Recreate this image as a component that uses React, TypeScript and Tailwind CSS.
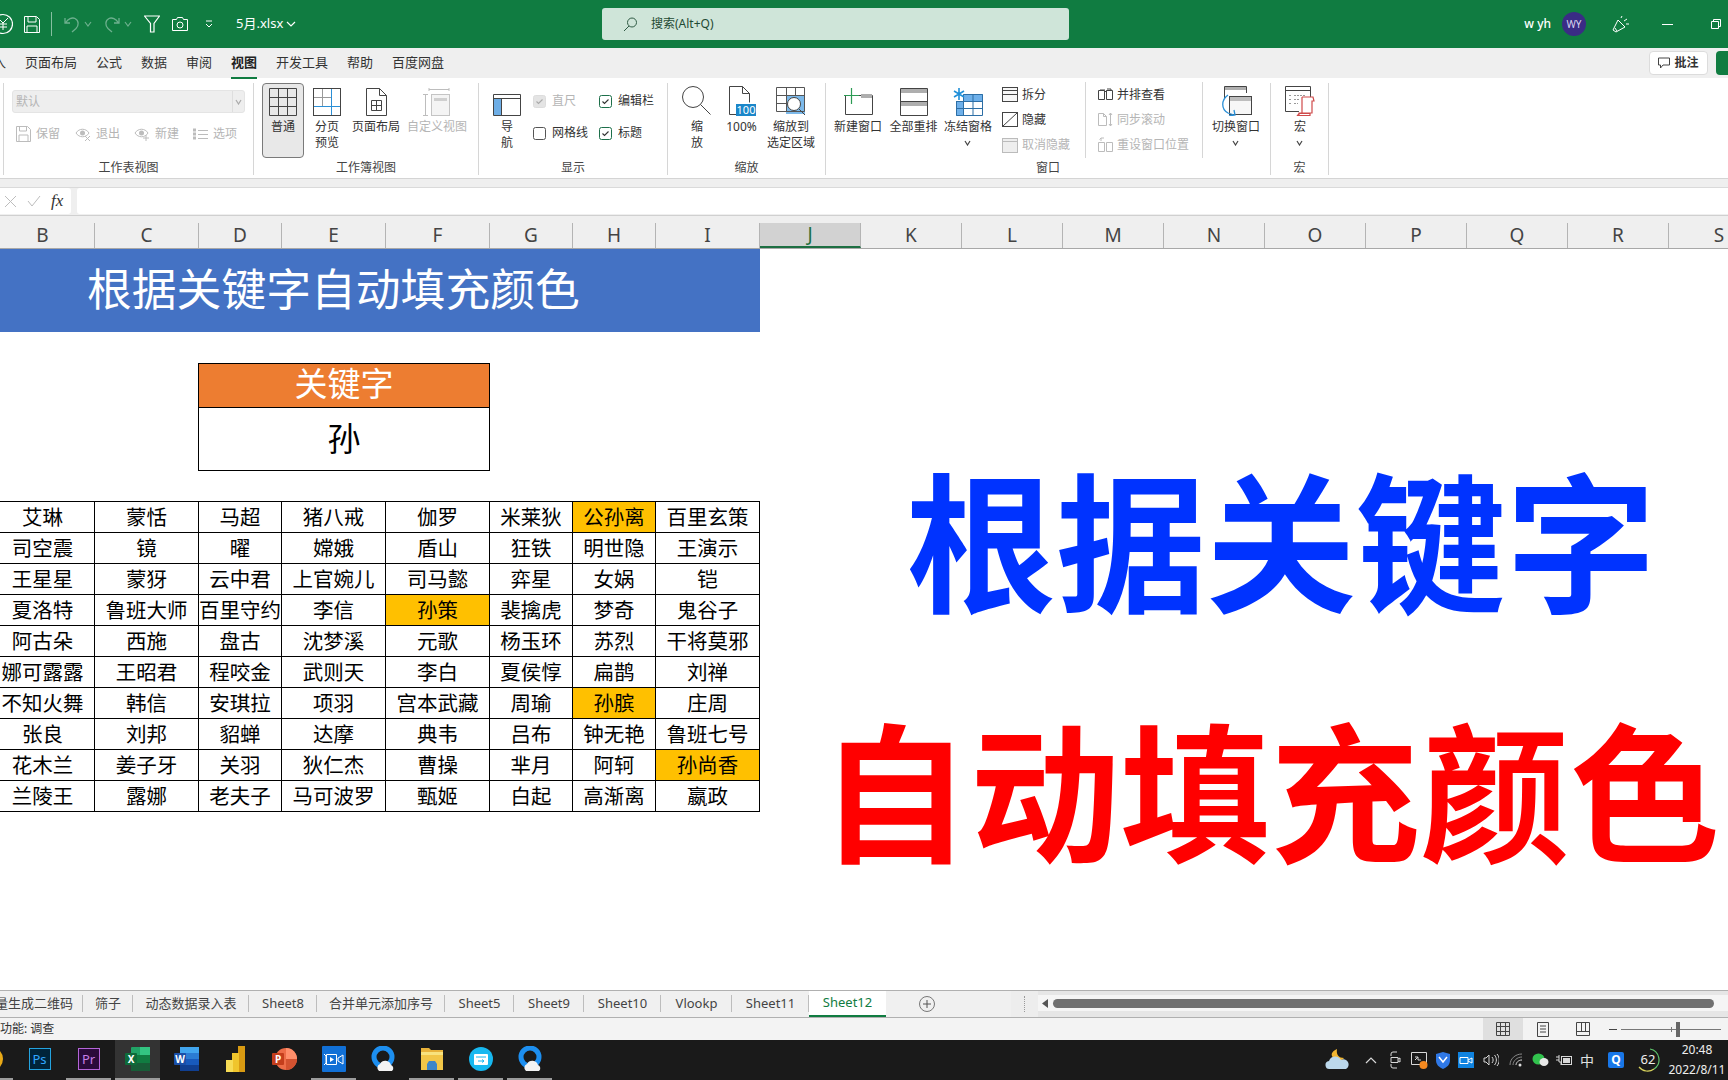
import React from "react";

const Svg = ({ w, h, children, className }: { w: number; h: number; children: React.ReactNode; className?: string }) => (
  <svg width={w} height={h} viewBox={`0 0 ${w} ${h}`} fill="none" className={`shrink-0 ${className ?? ""}`}>
    {children}
  </svg>
);

const Chevron = ({ c = "#fff", w = 10 }: { c?: string; w?: number }) => (
  <Svg w={w} h={6}>
    <path d={`M1 1 L${w / 2} 5 L${w - 1} 1`} stroke={c} strokeWidth="1.2" />
  </Svg>
);

/* ---------- title bar ---------- */
function TitleBar() {
  const dim = "#6db08e";
  return (
    <div className="h-[48px] bg-[#107c41] flex items-center text-white shrink-0">
      <Svg w={20} h={22} className="-ml-[7px]">
        <circle cx="10" cy="11" r="9.5" stroke="#fff" strokeWidth="1.2" />
        <path d="M5 5l5 5 5-5M10 10v7M6 11h8M6 14h8" stroke="#fff" />
      </Svg>
      <Svg w={16} h={17} className="ml-[11px]">
        <path d="M.5.500h12l3 3v13H.500z" stroke="#fff" />
        <path d="M4 1v5h8V1M3 16v-6h10v6" stroke="#fff" />
      </Svg>
      <div className="w-px h-[24px] bg-[#86bfa0] ml-[11px]" />
      <Svg w={16} h={17} className="ml-[12px]">
        <path d="M1 2v5h5M1.500 7C4 3 8 1 11 2.500c4 2 4 7 1 10L8 16" stroke={dim} strokeWidth="1.3" />
      </Svg>
      <div className="ml-[4px]"><Chevron c={dim} w={8} /></div>
      <Svg w={16} h={17} className="ml-[12px]">
        <path d="M15 2v5h-5M14.500 7C12 3 8 1 5 2.500c-4 2-4 7-1 10l4 3.500" stroke={dim} strokeWidth="1.3" />
      </Svg>
      <div className="ml-[4px]"><Chevron c={dim} w={8} /></div>
      <Svg w={16} h={18} className="ml-[12px]">
        <path d="M.5 1h15L10 8.500V17H6.500V8.500z" stroke="#fff" strokeWidth="1.2" />
      </Svg>
      <Svg w={16} h={14} className="ml-[12px]">
        <path d="M.5 2.500h4l1-2h5l1 2h4v11H.500z" stroke="#fff" />
        <circle cx="8" cy="8" r="3" stroke="#fff" />
      </Svg>
      <Svg w={8} h={8} className="ml-[17px]">
        <path d="M1 1h6M1 4l3 3 3-3" stroke="#fff" />
      </Svg>
      <span className="ml-[23px] w-[46px] text-[13px] whitespace-nowrap">5月.xlsx</span>
      <div className="ml-[4px]"><Chevron /></div>
      <div className="ml-[306px] w-[467px] h-[32px] rounded-[3px] bg-[#cfe5d9] flex items-center text-[#1f4a33] text-[12px] pl-[21px]">
        <Svg w={14} h={15}>
          <circle cx="9" cy="5.500" r="4.500" stroke="#2f5a44" />
          <path d="M6 9l-5 5" stroke="#2f5a44" />
        </Svg>
        <span className="ml-[14px]">搜索(Alt+Q)</span>
      </div>
      <div className="ml-auto flex items-center pr-[7px]">
        <span className="text-[12px] font-medium">w yh</span>
        <div className="ml-[11px] w-[24px] h-[24px] rounded-full bg-[#3a2c85] flex items-center justify-center text-[10px] text-[#d9d5f0]">WY</div>
        <Svg w={18} h={18} className="ml-[26px]">
          <path d="M1 15l5-10 7 7-9 5zM3 13l2 3M9 3l1-2M12 6l3-2M14 9l3 0" stroke="#fff" />
        </Svg>
        <div className="ml-[32px] w-[11px] h-px bg-white" />
        <Svg w={10} h={10} className="ml-[38px]">
          <path d="M.5 2.500h7v7h-7zM2.500 2.500v-2h7v7h-2" stroke="#fff" />
        </Svg>
      </div>
    </div>
  );
}

/* ---------- tabs ---------- */
function TabBar() {
  const tabs = ["页面布局", "公式", "数据", "审阅", "视图", "开发工具", "帮助", "百度网盘"];
  return (
    <div className="h-[30px] bg-[#efefef] flex items-center text-[13px] text-[#333] shrink-0">
      <span className="-ml-[20px] w-[26px] mr-[19px] whitespace-nowrap">插入</span>
      <div className="flex gap-[19px]">
        {tabs.map((t) => (
          <div key={t} className={`relative whitespace-nowrap ${t === "视图" ? "font-bold text-[#222]" : ""}`}>
            {t}
            {t === "视图" && <div className="absolute left-0 right-0 -bottom-[6px] h-[2px] bg-[#107c41]" />}
          </div>
        ))}
      </div>
      <div className="ml-auto flex items-center">
        <div className="w-[59px] h-[24px] bg-white border border-[#dcdcdc] rounded-[4px] flex items-center justify-center gap-[4px] text-[12px] font-bold text-[#333]">
          <Svg w={12} h={12}>
            <path d="M.5 1h11v7H5L2.500 11V8h-2z" stroke="#444" />
          </Svg>
          批注
        </div>
        <div className="ml-[8px] w-[12px] h-[24px] rounded-l-[4px] bg-[#107c41]" />
      </div>
    </div>
  );
}

/* ---------- ribbon helpers ---------- */
function Group({ w, label, children }: { w: string; label: string; children: React.ReactNode }) {
  return (
    <div className={`${w} h-[92px] mt-[5px] border-r border-[#d6d6d6] flex flex-col shrink-0`}>
      <div className="h-[75px] flex">{children}</div>
      <div className="mt-[2px] h-[15px] leading-[15px] text-center text-[12px] text-[#444]">{label}</div>
    </div>
  );
}

function Big({
  w,
  icon,
  lines,
  off,
  caret,
  sel,
}: {
  w: string;
  icon: React.ReactNode;
  lines: string[];
  off?: boolean;
  caret?: boolean;
  sel?: boolean;
}) {
  return (
    <div
      className={`${w} h-[75px] pt-[4px] flex flex-col items-center shrink-0 text-[12px] leading-[16px] ${
        off ? "text-[#b5b5b5]" : "text-[#333]"
      } ${sel ? "bg-[#e8e8e8] border border-[#7a7a7a] rounded-[4px]" : "border border-transparent"}`}
    >
      <div className="h-[28px] flex items-end justify-center">{icon}</div>
      <div className="mt-[3px] flex flex-col items-center whitespace-nowrap">
        {lines.map((l) => (
          <span key={l}>{l}</span>
        ))}
        {caret && (
          <div className="h-[16px] flex items-center">
            <Chevron c="#444" w={7} />
          </div>
        )}
      </div>
    </div>
  );
}

const Check = ({ on, off }: { on?: boolean; off?: boolean }) => (
  <Svg w={13} h={13}>
    <rect x=".5" y=".5" width="12" height="12" rx="2" stroke={off ? "#ddd" : on ? "#1d6f4a" : "#555"} fill={off ? "#e4e4e4" : "#fff"} />
    {on && <path d="M3.500 6.500l2 2 4-4" stroke={off ? "#aaa" : "#333"} strokeWidth="1.1" />}
  </Svg>
);

const CheckRow = ({ label, on, off }: { label: string; on?: boolean; off?: boolean }) => (
  <div className={`h-[24px] flex items-center gap-[6px] text-[12px] whitespace-nowrap ${off ? "text-[#b5b5b5]" : "text-[#333]"}`}>
    <Check on={on} off={off} />
    {label}
  </div>
);

const SmallRow = ({ icon, label, off }: { icon: React.ReactNode; label: string; off?: boolean }) => (
  <div className={`h-[26px] flex items-center gap-[4px] text-[12px] whitespace-nowrap ${off ? "text-[#b5b5b5]" : "text-[#333]"}`}>
    {icon}
    {label}
  </div>
);

const MiniAction = ({ icon, label }: { icon: React.ReactNode; label: string }) => (
  <div className="w-[59px] flex items-center gap-[5px] text-[12px] text-[#b5b5b5] whitespace-nowrap">
    {icon}
    {label}
  </div>
);

/* ---------- ribbon icons ---------- */
const G = "#444";
const B = "#2b8fd6";
const Win = ({ x, y, w, h, c = G, bar = "#bdbdbd" }: { x: number; y: number; w: number; h: number; c?: string; bar?: string }) => (
  <>
    <rect x={x + 0.5} y={y + 0.5} width={w} height={h} stroke={c} fill="#f7f7f7" />
    <rect x={x + 1} y={y + 1} width={w - 1} height={4} fill={bar} />
  </>
);

const INormal = () => (
  <Svg w={28} h={28}>
    <path d="M.5.500h27v27H.500zM9.500.5v27M18.500.5v27M.5 9.500h27M.5 18.500h27" stroke={G} />
  </Svg>
);
const IBreak = () => (
  <Svg w={28} h={28}>
    <path d="M9.500.5v18M.5 9.500h18" stroke="#999" />
    <path d="M18.500.5v27M.5 18.500h27" stroke={B} />
    <rect x=".5" y=".5" width="27" height="27" stroke={G} />
  </Svg>
);
const ILayout = () => (
  <Svg w={21} h={28}>
    <path d="M.5.500h13l7 7v20H.500zM13.500.5v7h7" stroke={G} />
    <path d="M5.500 12.500h10v10h-10zM5.500 17.500h10M10.500 12.500v10" stroke={G} />
  </Svg>
);
const ICustom = () => (
  <Svg w={30} h={28}>
    <path d="M7 1.500h20M7 0v3M27 0v3M1 6.500h5M1 27.500h5M3.500 6.500v21" stroke="#bdbdbd" />
    <rect x="9.500" y="6.500" width="18" height="21" stroke="#c4c4c4" fill="#f4f4f4" />
    <rect x="12" y="10" width="13" height="3" fill="#cfcfcf" />
  </Svg>
);
const INav = () => (
  <Svg w={28} h={22}>
    <rect x="1" y="5" width="8" height="16" fill="#6eaee6" />
    <path d="M.5.500h27v21H.500zM.5 4.500h27M8.500 4.500v17" stroke={G} />
  </Svg>
);
const IZoom = () => (
  <Svg w={30} h={30}>
    <circle cx="11" cy="11" r="10.500" stroke={G} />
    <path d="M18.500 18.500l10 10" stroke={G} />
  </Svg>
);
const I100 = () => (
  <Svg w={28} h={30}>
    <path d="M1.500 28.500V.5h13l7 7v9M14.500.5v7h7M1.500 28.500h7" stroke={G} />
    <rect x="8" y="18" width="20" height="12" fill="#1b86c9" />
    <text x="18" y="28" textAnchor="middle" fontSize="11" fill="#fff" fontFamily="Noto Sans">100</text>
  </Svg>
);
const IZoomSel = () => (
  <Svg w={30} h={30}>
    <rect x="10" y="9" width="19" height="19" fill="#7cb9ea" />
    <path d="M.5 1.500h28v24H.500zM.5 9.500h28M.5 17.500h10M10.500 1.500v24M19.500 1.500v8" stroke="#555" />
    <circle cx="18" cy="18" r="6.500" stroke={G} fill="#fff" />
    <path d="M23 23l6 6" stroke={G} />
  </Svg>
);
const INew = () => (
  <Svg w={30} h={28}>
    <path d="M2.500 7.500v19h27v-19H14" stroke={G} />
    <rect x="18" y="6" width="11" height="4" fill="#aeaeae" />
    <path d="M8.500 0v16M1 7.500h15" stroke="#2c9b54" strokeWidth="1.2" />
  </Svg>
);
const IArrange = () => (
  <Svg w={28} h={28}>
    <path d="M.5.500h27v27H.500zM.5 13.500h27" stroke={G} />
    <rect x="1" y="1" width="26" height="4" fill="#aeaeae" />
    <rect x="1" y="14" width="26" height="4" fill="#aeaeae" />
  </Svg>
);
const IFreeze = () => (
  <Svg w={30} h={28}>
    <rect x="4" y="6" width="26" height="22" fill="#fff" />
    <rect x="10" y="6" width="20" height="7" fill="#6eb0ea" />
    <rect x="3" y="13" width="7" height="15" fill="#6eb0ea" />
    <path d="M3.500 13v14.500h26v-21h-19M10.500 6.500v21M20 6.500v21M3.500 13.500h26M3.500 20.500h26" stroke="#2d6ea5" />
    <path d="M6 0v12M1 3l10 6M11 3L1 9" stroke="#1f8fd8" strokeWidth="1.6" />
  </Svg>
);
const ISplit = () => (
  <Svg w={16} h={15}>
    <rect x=".5" y=".5" width="15" height="14" stroke={G} fill="#f7f7f7" />
    <path d="M.5 3.500h15M.5 7.500h15" stroke={G} />
  </Svg>
);
const IHide = () => (
  <Svg w={16} h={15}>
    <rect x=".5" y=".5" width="15" height="14" stroke={G} />
    <path d="M1 14L15 1" stroke={G} />
  </Svg>
);
const IUnhide = () => (
  <Svg w={16} h={15}>
    <rect x=".5" y=".5" width="15" height="14" stroke="#bbb" fill="#eee" />
    <path d="M.5 3.500h15" stroke="#bbb" />
  </Svg>
);
const IBook = ({ c = G }: { c?: string }) => (
  <Svg w={15} h={13}>
    <path d="M.5 2.500h6v9h-6zM8.500 2.500h6v9h-6zM6.500 4.500l2-2" stroke={c} />
    <path d="M2 3v-1h5M13 3V1H9" stroke={c} />
  </Svg>
);
const ISync = () => (
  <Svg w={15} h={15}>
    <path d="M.5 1.500h5l3 3v9h-8zM5.500 1.500v3h3M12.500 1v13M11 3l1.500-2L14 3M11 12l1.500 2 1.500-2" stroke="#bcbcbc" />
  </Svg>
);
const IReset = () => (
  <Svg w={15} h={16}>
    <path d="M.5 5.500h6v9h-6zM8.500 5.500h6v9h-6zM3 4V1h3M3 1L1.500 2.500" stroke="#bcbcbc" />
  </Svg>
);
const ISwitch = () => (
  <Svg w={31} h={30}>
    <path d="M3.500 12V.5h22V7" stroke={G} />
    <rect x="4" y="1" width="21" height="3" fill="#aeaeae" />
    <Win x={8} y={10} w={22} h={18} />
    <path d="M7 9C0 14 0 23 7 27l6 2M13 24l1 5-6 1" stroke={B} strokeWidth="1.3" />
  </Svg>
);
const IMacro = () => (
  <Svg w={30} h={30}>
    <path d="M.5.500h25v25H.500zM.5 4.500h25" stroke={G} />
    <path d="M4 9.500h3M9 9.500h12M4 13.500h3M9 13.500h6M4 17.500h3M9 17.500h4" stroke="#999" strokeDasharray="2 1" />
    <path d="M17 11h11l1 4h-2v12H14v3h-1M14 27.500h11v2H12.500zM17 11v16" stroke="#cf4a4a" strokeWidth="1.2" fill="#fff" />
  </Svg>
);

function Ribbon() {
  return (
    <div className="h-[101px] bg-white border-b border-[#d4d4d4] flex pl-[3px] shrink-0">
      <div className="h-[92px] mt-[5px] border-l border-[#d6d6d6]" />
      <Group w="w-[250px]" label="工作表视图">
        <div className="pl-[8px] pt-[7px] flex flex-col">
          <div className="w-[233px] h-[23px] rounded-[3px] bg-[#eeeeee] border border-[#e4e4e4] flex items-center pl-[3px] text-[12px] text-[#b5b5b5]">
            默认
            <div className="ml-auto h-full w-[12px] border-l border-[#dedede] flex items-center justify-center">
              <Chevron c="#aaa" w={7} />
            </div>
          </div>
          <div className="mt-[9px] h-[24px] flex items-center pl-[4px]">
            <MiniAction
              label="保留"
              icon={
                <Svg w={15} h={16}>
                  <path d="M.5.500h11l3 3v12H.500zM3.500 1v4h7V1M3 15V9h9v6" stroke="#bcbcbc" />
                </Svg>
              }
            />
            <MiniAction
              label="退出"
              icon={
                <Svg w={16} h={14}>
                  <path d="M1 6c3-5 10-5 13 0-3 5-10 5-13 0z" stroke="#bcbcbc" />
                  <circle cx="7.500" cy="6" r="2.500" fill="#bcbcbc" />
                  <path d="M10 9l5 5M15 9l-5 5" stroke="#bcbcbc" />
                </Svg>
              }
            />
            <MiniAction
              label="新建"
              icon={
                <Svg w={16} h={14}>
                  <path d="M1 6c3-5 10-5 13 0-3 5-10 5-13 0z" stroke="#bcbcbc" />
                  <circle cx="7.500" cy="6" r="2.500" fill="#bcbcbc" />
                  <path d="M12 8v6M9 11h6" stroke="#bcbcbc" />
                </Svg>
              }
            />
            <MiniAction
              label="选项"
              icon={
                <Svg w={15} h={13}>
                  <path d="M5 2.500h10M5 6.500h10M5 10.500h10" stroke="#bcbcbc" />
                  <rect x=".5" y="1" width="2" height="2" stroke="#bcbcbc" />
                  <rect x=".5" y="5" width="2" height="2" stroke="#bcbcbc" />
                  <rect x=".5" y="9" width="2" height="2" stroke="#bcbcbc" />
                </Svg>
              }
            />
          </div>
        </div>
      </Group>
      <Group w="w-[225px]" label="工作簿视图">
        <div className="pl-[8px] flex">
          <Big w="w-[42px]" sel icon={<INormal />} lines={["普通"]} />
          <Big w="w-[46px]" icon={<IBreak />} lines={["分页", "预览"]} />
          <Big w="w-[52px]" icon={<ILayout />} lines={["页面布局"]} />
          <Big w="w-[70px]" off icon={<ICustom />} lines={["自定义视图"]} />
        </div>
      </Group>
      <Group w="w-[189px]" label="显示">
        <div className="pl-[9px] flex">
          <Big w="w-[38px]" icon={<INav />} lines={["导", "航"]} />
          <div className="ml-[7px] w-[66px] pt-[6px] flex flex-col gap-[8px]">
            <CheckRow label="直尺" on off />
            <CheckRow label="网格线" />
          </div>
          <div className="pt-[6px] flex flex-col gap-[8px]">
            <CheckRow label="编辑栏" on />
            <CheckRow label="标题" on />
          </div>
        </div>
      </Group>
      <Group w="w-[158px]" label="缩放">
        <div className="pl-[7px] flex">
          <Big w="w-[44px]" icon={<IZoom />} lines={["缩", "放"]} />
          <Big w="w-[45px]" icon={<I100 />} lines={["100%"]} />
          <Big w="w-[54px]" icon={<IZoomSel />} lines={["缩放到", "选定区域"]} />
        </div>
      </Group>
      <Group w="w-[445px]" label="窗口">
        <div className="pl-[5px] flex">
          <Big w="w-[54px]" icon={<INew />} lines={["新建窗口"]} />
          <Big w="w-[57px]" icon={<IArrange />} lines={["全部重排"]} />
          <Big w="w-[52px]" icon={<IFreeze />} lines={["冻结窗格"]} caret />
          <div className="ml-[8px] -mt-[1px] w-[84px] h-[76px] flex flex-col border-r border-[#d6d6d6] self-start">
            <SmallRow icon={<ISplit />} label="拆分" />
            <SmallRow icon={<IHide />} label="隐藏" />
            <SmallRow icon={<IUnhide />} label="取消隐藏" off />
          </div>
          <div className="ml-[12px] -mt-[1px] w-[105px] h-[76px] flex flex-col border-r border-[#d6d6d6] self-start">
            <SmallRow icon={<IBook />} label="并排查看" />
            <SmallRow icon={<ISync />} label="同步滚动" off />
            <SmallRow icon={<IReset />} label="重设窗口位置" off />
          </div>
          <Big w="w-[66px]" icon={<ISwitch />} lines={["切换窗口"]} caret />
        </div>
      </Group>
      <Group w="w-[58px]" label="宏">
        <Big w="w-[58px]" icon={<IMacro />} lines={["宏"]} caret />
      </Group>
    </div>
  );
}

function FormulaBar() {
  return (
    <>
      <div className="h-[9px] bg-[#efefef] border-b border-[#dadada] shrink-0" />
      <div className="h-[28px] bg-[#efefef] flex pb-[1px] border-b border-[#d0d0d0] shrink-0">
        <div className="w-[71px] bg-white rounded-r-[3px] flex items-center pl-[4px] gap-[10px]">
          <Svg w={13} h={13}>
            <path d="M1 1l11 11M12 1L1 12" stroke="#bdbdbd" />
          </Svg>
          <Svg w={14} h={12}>
            <path d="M1 6l4 5 8-10" stroke="#bdbdbd" />
          </Svg>
          <span className="[font-family:'Liberation_Serif',serif] italic text-[17px] text-[#333]">fx</span>
        </div>
        <div className="ml-[6px] flex-1 bg-white rounded-l-[3px]" />
      </div>
    </>
  );
}

/* ---------- sheet ---------- */
const cols: [string, string][] = [
  ["B", "w-[104px]"],
  ["C", "w-[104px]"],
  ["D", "w-[83px]"],
  ["E", "w-[104px]"],
  ["F", "w-[104px]"],
  ["G", "w-[83px]"],
  ["H", "w-[83px]"],
  ["I", "w-[104px]"],
  ["J", "w-[101px]"],
  ["K", "w-[101px]"],
  ["L", "w-[101px]"],
  ["M", "w-[101px]"],
  ["N", "w-[101px]"],
  ["O", "w-[101px]"],
  ["P", "w-[101px]"],
  ["Q", "w-[101px]"],
  ["R", "w-[101px]"],
  ["S", "w-[101px]"],
];

function ColHeader() {
  return (
    <div className="h-[33px] bg-[#efefef] flex items-end -ml-[9px] border-b border-[#a8a8a8] shrink-0">
      {cols.map(([c, w]) => (
        <div
          key={c}
          className={`${w} shrink-0 h-[25px] flex items-center justify-center text-[19px] leading-none border-r border-[#b4b4b4] ${
            c === "J" ? "bg-[#d2d2d2] text-[#1d6f42] border-b-2 border-b-[#1d6f42]" : "text-[#444]"
          }`}
        >
          {c}
        </div>
      ))}
    </div>
  );
}

const rows = [
  ["艾琳", "蒙恬", "马超", "猪八戒", "伽罗", "米莱狄", "公孙离", "百里玄策"],
  ["司空震", "镜", "曜", "嫦娥", "盾山", "狂铁", "明世隐", "王演示"],
  ["王星星", "蒙犽", "云中君", "上官婉儿", "司马懿", "弈星", "女娲", "铠"],
  ["夏洛特", "鲁班大师", "百里守约", "李信", "孙策", "裴擒虎", "梦奇", "鬼谷子"],
  ["阿古朵", "西施", "盘古", "沈梦溪", "元歌", "杨玉环", "苏烈", "干将莫邪"],
  ["娜可露露", "王昭君", "程咬金", "武则天", "李白", "夏侯惇", "扁鹊", "刘禅"],
  ["不知火舞", "韩信", "安琪拉", "项羽", "宫本武藏", "周瑜", "孙膑", "庄周"],
  ["张良", "刘邦", "貂蝉", "达摩", "典韦", "吕布", "钟无艳", "鲁班七号"],
  ["花木兰", "姜子牙", "关羽", "狄仁杰", "曹操", "芈月", "阿轲", "孙尚香"],
  ["兰陵王", "露娜", "老夫子", "马可波罗", "甄姬", "白起", "高渐离", "嬴政"],
];

function Sheet() {
  return (
    <div className="flex-1 flex min-h-0 bg-white overflow-hidden">
      <div className="w-[760px] shrink-0 overflow-hidden">
        <div className="h-[83px] pb-[3px] bg-[#4472c4] flex items-center pl-[87px] text-white text-[44.8px] whitespace-nowrap">
          根据关键字自动填充颜色
        </div>
        <div className="mt-[31px] ml-[198px] w-[292px] border border-black">
          <div className="h-[44px] pb-[3px] bg-[#ed7d31] border-b border-black flex items-center justify-center text-white text-[33px]">关键字</div>
          <div className="h-[62px] flex items-center justify-center text-[33px] text-black">孙</div>
        </div>
        <div className="mt-[30px] -ml-[9px] w-[769px] grid grid-cols-[104px_104px_83px_104px_104px_83px_83px_104px] border-t border-black">
          {rows.flat().map((n, i) => (
            <div
              key={i}
              className={`h-[31px] flex items-center justify-center border-r border-b border-black text-[20.5px] text-black whitespace-nowrap overflow-hidden ${
                n.includes("孙") ? "bg-[#ffc000]" : ""
              }`}
            >
              {n}
            </div>
          ))}
        </div>
      </div>
      <div className="flex-1 pl-[60px] pt-[194px] flex flex-col items-center gap-[50px] font-bold text-[150px] leading-[200px] whitespace-nowrap">
        <div className="h-[200px] pl-[6px] text-[#0033ff]">根据关键字</div>
        <div className="h-[200px] pr-[16px] text-[#ff0000]">自动填充颜色</div>
      </div>
    </div>
  );
}

function SheetTabs() {
  const list: [string, string][] = [
    ["筛子", "w-[50px]"],
    ["动态数据录入表", "w-[116px]"],
    ["Sheet8", "w-[68px]"],
    ["合并单元添加序号", "w-[128px]"],
    ["Sheet5", "w-[69px]"],
    ["Sheet9", "w-[70px]"],
    ["Sheet10", "w-[77px]"],
    ["Vlookp", "w-[71px]"],
    ["Sheet11", "w-[77px]"],
  ];
  return (
    <div className="h-[28px] bg-[#f0f0f0] border-t border-b border-[#b0b0b0] flex items-stretch text-[13px] text-[#444] shrink-0">
      <div className="w-[83px] flex justify-end items-center pr-[10px] overflow-hidden whitespace-nowrap shrink-0 relative">
        <div className="absolute right-0 top-[4px] bottom-[5px] w-px bg-[#bdbdbd]" />
        批量生成二维码
      </div>
      {list.map(([t, w]) => (
        <div key={t} className={`${w} flex items-center justify-center whitespace-nowrap shrink-0 relative`}>
          {t}
          <div className="absolute right-0 top-[4px] bottom-[5px] w-px bg-[#bdbdbd]" />
        </div>
      ))}
      <div className="w-[77px] bg-white border-b-2 border-[#107c41] text-[#107c41] flex items-center justify-center shrink-0">Sheet12</div>
      <div className="w-[125px] flex items-center pl-[33px] shrink-0">
        <Svg w={16} h={16}>
          <circle cx="8" cy="8" r="7.500" stroke="#777" />
          <path d="M8 4v8M4 8h8" stroke="#555" />
        </Svg>
      </div>
      <div className="flex-1 flex bg-[#e6e6e6]">
        <div className="w-[27px] bg-[#ededed] flex items-center justify-center">
          <div className="w-px h-[16px] border-l border-dotted border-[#999]" />
        </div>
        <div className="flex-1 h-[16px] mt-[4px] bg-[#f5f5f5] flex items-center pl-[4px]">
          <Svg w={7} h={9}>
            <path d="M6 0v9L0 4.500z" fill="#555" />
          </Svg>
          <div className="ml-[4px] w-[661px] h-[9px] rounded-full bg-[#707070]" />
        </div>
      </div>
    </div>
  );
}

function StatusBar() {
  return (
    <div className="h-[22px] bg-[#f3f3f3] flex items-center text-[12px] text-[#333] shrink-0">
      <span className="-ml-[24px] whitespace-nowrap">辅助功能: 调查</span>
      <div className="ml-auto h-full flex items-center">
        <div className="w-[40px] h-full bg-[#dfdfdf] flex items-center justify-center">
          <Svg w={14} h={14}>
            <path d="M.5.500h13v13H.500zM4.500.5v13M9.500.5v13M.5 4.500h13M.5 9.500h13" stroke="#444" />
          </Svg>
        </div>
        <div className="w-[40px] flex justify-center">
          <Svg w={12} h={15}>
            <path d="M.5.500h11v14H.500zM3 4h6M3 7h6M3 10h6" stroke="#444" />
          </Svg>
        </div>
        <div className="w-[40px] flex justify-center">
          <Svg w={14} h={14}>
            <path d="M.5.500h13v13H.500zM.5 9.500h13M5.500.5v9M9.500.5v9" stroke="#444" />
          </Svg>
        </div>
        <div className="ml-[6px] w-[8px] h-px bg-[#444]" />
        <div className="ml-[4px] w-[100px] h-px bg-[#777] relative mr-[7px]">
          <div className="absolute left-[55px] -top-[7px] w-[4px] h-[15px] bg-[#666]" />
          <div className="absolute left-[50px] -top-[2px] w-px h-[5px] bg-[#777]" />
        </div>
      </div>
    </div>
  );
}

/* ---------- taskbar ---------- */
const Q = () => (
  <Svg w={24} h={26}>
    <circle cx="12" cy="11" r="9" stroke="#1d8ff0" strokeWidth="5" />
    <path d="M8 25a4 4 0 0 1 1-7 6 6 0 0 1 11 1 3.500 3.500 0 0 1 1 6z" fill="#f3f3f3" />
  </Svg>
);

const apps: { key: string; line: boolean; sel?: boolean; icon: React.ReactNode }[] = [
  { key: "cut", line: true, icon: <div className="w-[24px] h-[24px] rounded-full bg-[#e9a917]" /> },
  {
    key: "ps",
    line: false,
    icon: (
      <div className="w-[22px] h-[22px] bg-[#00243a] border border-[#24a3df] flex items-center justify-center text-[13px] leading-none text-[#31a8ff]">Ps</div>
    ),
  },
  {
    key: "pr",
    line: true,
    icon: (
      <div className="w-[22px] h-[22px] bg-[#2a0a3a] border border-[#b565d8] flex items-center justify-center text-[13px] leading-none text-[#c77ee8]">Pr</div>
    ),
  },
  {
    key: "x",
    line: true,
    sel: true,
    icon: (
      <Svg w={25} h={24}>
        <rect x="6" y="0" width="19" height="24" rx="1" fill="#21a366" />
        <rect x="15" y="0" width="10" height="8" fill="#33c481" />
        <rect x="6" y="8" width="9" height="8" fill="#107c41" />
        <rect x="15" y="8" width="10" height="8" fill="#107c41" />
        <rect x="6" y="16" width="19" height="8" fill="#185c37" />
        <rect x="0" y="6" width="12" height="12" rx="1" fill="#0e6b3a" />
        <text x="6" y="16" textAnchor="middle" fontSize="10" fontWeight="700" fill="#fff" fontFamily="Noto Sans">X</text>
      </Svg>
    ),
  },
  {
    key: "w",
    line: false,
    icon: (
      <Svg w={25} h={24}>
        <rect x="6" y="0" width="19" height="24" rx="1" fill="#2b7cd3" />
        <rect x="6" y="0" width="19" height="6" fill="#41a5ee" />
        <rect x="6" y="12" width="19" height="6" fill="#185abd" />
        <rect x="6" y="18" width="19" height="6" fill="#103f91" />
        <rect x="0" y="6" width="12" height="12" rx="1" fill="#1a4fa8" />
        <text x="6" y="16" textAnchor="middle" fontSize="10" fontWeight="700" fill="#fff" fontFamily="Noto Sans">W</text>
      </Svg>
    ),
  },
  {
    key: "bi",
    line: false,
    icon: (
      <Svg w={20} h={26}>
        <rect x="12" y="0" width="7" height="26" fill="#d99b12" />
        <rect x="6" y="7" width="7" height="19" fill="#f0c52c" />
        <rect x="0" y="14" width="7" height="12" fill="#f7dc55" />
      </Svg>
    ),
  },
  {
    key: "p",
    line: false,
    icon: (
      <Svg w={25} h={24}>
        <circle cx="14" cy="12" r="11" fill="#ed6c47" />
        <path d="M14 1a11 11 0 0 1 11 11H14z" fill="#ff8f6b" />
        <path d="M14 12h11a11 11 0 0 1-11 11z" fill="#d35230" />
        <rect x="0" y="6" width="12" height="12" rx="1" fill="#c43e1c" />
        <text x="6" y="16" textAnchor="middle" fontSize="10" fontWeight="700" fill="#fff" fontFamily="Noto Sans">P</text>
      </Svg>
    ),
  },
  {
    key: "v",
    line: true,
    icon: (
      <Svg w={24} h={26}>
        <rect width="24" height="26" rx="1" fill="#1170d6" />
        <path d="M2 8l2 2v7l-2 2M4.500 8.500h10v10h-10zM16 12l5-3v9l-5-3z" stroke="#fff" />
        <path d="M8 11l4 2.500L8 16z" fill="#fff" />
      </Svg>
    ),
  },
  { key: "q1", line: false, icon: <Q /> },
  {
    key: "f",
    line: true,
    icon: (
      <Svg w={22} h={22}>
        <path d="M0 0h8l2 2h12v20H0z" fill="#e8b23a" />
        <rect x="0" y="4" width="22" height="3" fill="#f8e27e" />
        <rect x="0" y="7" width="22" height="15" fill="#f2c648" />
        <path d="M6 22v-6l2-3h6l2 3v6z" fill="#3e86c8" />
      </Svg>
    ),
  },
  {
    key: "c",
    line: true,
    icon: (
      <Svg w={24} h={24}>
        <circle cx="12" cy="12" r="12" fill="#17b8f0" />
        <rect x="5" y="7" width="14" height="11" rx="1" fill="#fff" />
        <path d="M7 10h10" stroke="#17b8f0" />
        <path d="M9 14h6M13 12.500l2 1.500-2 1.500" stroke="#17b8f0" />
      </Svg>
    ),
  },
  { key: "q2", line: true, icon: <Q /> },
];

function Taskbar() {
  const ic = "#d8d8d8";
  return (
    <div className="h-[40px] bg-[#1a1a1a] flex text-white shrink-0">
      <div className="-ml-[34px] flex">
        {apps.map((a) => (
          <div
            key={a.key}
            className={`w-[45px] mx-[2px] h-full flex items-center justify-center border-b-2 ${a.line ? "border-[#9c9c9c]" : "border-transparent"} ${
              a.sel ? "bg-[#333333]" : ""
            }`}
          >
            {a.icon}
          </div>
        ))}
      </div>
      <div className="ml-auto flex items-center">
        <div className="w-[30px] flex justify-center">
          <Svg w={22} h={22} className="overflow-visible">
            <path d="M10 0c-1 6 2 9 7 9-3 4-10 4-12-2C4 4 6 2 10 0z" fill="#f2b632" />
            <path d="M3 20a4 4 0 0 1-1-8 6.500 6.500 0 0 1 12-1 4.500 4.500 0 0 1 5 9z" fill="#bcd8ec" />
          </Svg>
        </div>
        <div className="ml-[6px] w-[24px] flex justify-center">
          <Svg w={12} h={7}>
            <path d="M1 6l5-5 5 5" stroke={ic} strokeWidth="1.2" />
          </Svg>
        </div>
        <div className="w-[24px] flex justify-center">
          <Svg w={12} h={18}>
            <path d="M2 5V3a2 2 0 0 1 2-2h4M2 13v2a2 2 0 0 0 2 2h4M2 6.500h7v5H2zM9 8l2-1v4l-2-1" stroke={ic} />
          </Svg>
        </div>
        <div className="w-[24px] flex justify-center">
          <Svg w={17} h={17}>
            <path d="M.5.500h15v12H.500z" stroke={ic} />
            <path d="M4 8l3-3M4 5h3v3M7 8h3" stroke={ic} />
            <circle cx="12.500" cy="13" r="4" fill="#f5891f" />
          </Svg>
        </div>
        <div className="w-[23px] flex justify-center">
          <Svg w={14} h={17}>
            <path d="M7 0l7 2v6c0 5-3 7-7 9-4-2-7-4-7-9V2z" fill="#2f78e6" />
            <path d="M3 5l4 5 4-5" stroke="#fff" strokeWidth="1.500" />
          </Svg>
        </div>
        <div className="w-[24px] flex justify-center">
          <Svg w={16} h={16}>
            <rect width="16" height="16" fill="#0f83e0" />
            <path d="M2 5.500h8v6H2zM10 8l4-2v5l-4-2" stroke="#fff" />
          </Svg>
        </div>
        <div className="w-[25px] flex justify-center">
          <Svg w={16} h={14}>
            <path d="M1 5h2l3-3v10L3 9H1zM9 4c1.500 2 1.500 4 0 6M11.500 2c2.500 3 2.500 7 0 10M14 1c3 3.500 3 8 0 12" stroke={ic} />
          </Svg>
        </div>
        <div className="w-[26px] flex justify-center">
          <Svg w={14} h={14}>
            <path d="M1 12C1 6 6 1 13 1M4 12c0-4 4-8 9-8" stroke="#888" />
            <path d="M7 12c0-2 2-5 6-5" stroke="#ddd" />
            <circle cx="11" cy="12" r="1.500" fill="#ddd" />
          </Svg>
        </div>
        <div className="w-[23px] flex justify-center">
          <Svg w={17} h={14}>
            <ellipse cx="6.500" cy="6" rx="6" ry="5.500" fill="#31c24d" />
            <ellipse cx="12" cy="9" rx="4.500" ry="4" fill="#e8e8e8" />
          </Svg>
        </div>
        <div className="w-[23px] flex justify-center">
          <Svg w={16} h={12}>
            <path d="M0 3h3M0 6h3M3 1v7h2v3" stroke={ic} />
            <rect x="5.500" y="2.500" width="10" height="8" stroke={ic} />
            <rect x="7" y="4" width="7" height="5" fill={ic} />
          </Svg>
        </div>
        <div className="w-[24px] text-center text-[14px] text-[#e0e0e0]">中</div>
        <div className="w-[34px] flex justify-center">
          <div className="w-[16px] h-[16px] rounded-[2px] bg-[#1877e8] flex items-center justify-center text-[12px] font-bold leading-none">Q</div>
        </div>
        <div className="w-[30px] flex justify-center">
          <div className="relative w-[24px] h-[24px] flex items-center justify-center text-[13px] text-[#eee]">
            <Svg w={24} h={24} className="absolute inset-0">
              <path d="M14 1a11 11 0 0 1 4 20" stroke="#5fc46b" strokeWidth="1.200" />
              <path d="M18 21a11 11 0 0 1-15-2" stroke="#d8d25c" strokeWidth="1.200" />
            </Svg>
            62
          </div>
        </div>
        <div className="ml-[3px] w-[62px] flex flex-col items-center text-[12px] leading-[20px] text-[#eee] whitespace-nowrap">
          <span>20:48</span>
          <span>2022/8/11</span>
        </div>
      </div>
    </div>
  );
}

export default function App() {
  return (
    <div className="w-[1728px] h-[1080px] overflow-hidden flex flex-col bg-white [font-family:'Noto_Sans','Noto_Sans_CJK_SC',sans-serif]">
      <TitleBar />
      <TabBar />
      <Ribbon />
      <FormulaBar />
      <ColHeader />
      <Sheet />
      <SheetTabs />
      <StatusBar />
      <Taskbar />
    </div>
  );
}
